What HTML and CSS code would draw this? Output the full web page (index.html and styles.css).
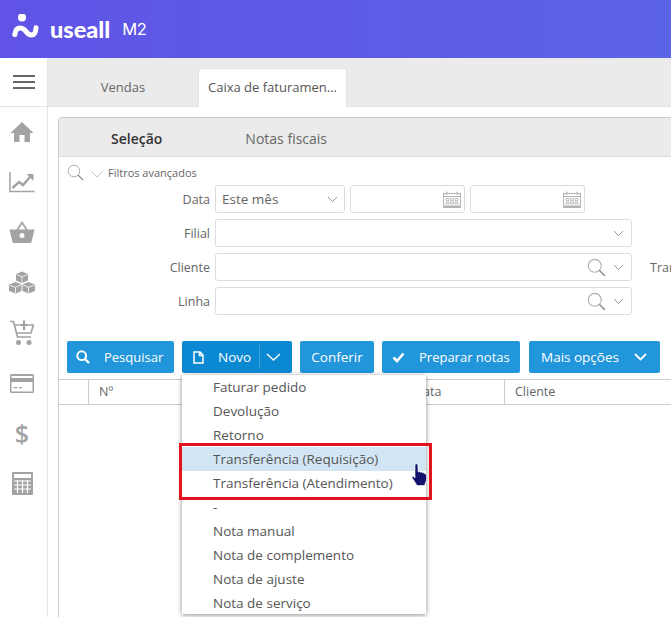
FILE: index.html
```html
<!DOCTYPE html>
<html lang="en">
<head>
    <meta charset="UTF-8">
    <meta name="viewport" content="width=device-width, initial-scale=1.0">
    <title>Useall M2</title>
    <link rel="stylesheet" href="styles.css">
</head>
<body>
    <header class="topbar">
        <svg class="logo-mark" width="28" height="30" viewBox="0 0 28 30">
            <circle cx="10" cy="3.4" r="4" fill="#fff"/>
            <path d="M2.8 20.6 Q3.6 14 8 14 Q11.5 14 14 17.5 Q16.5 21 19.5 21 Q23.6 21 24 13.8" fill="none" stroke="#fff" stroke-width="5" stroke-linecap="round"/>
        </svg>
        <span class="logo-name">useall</span>
        <span class="logo-product">M2</span>
    </header>

    <div class="layout">
        <aside class="sidebar">
            <div class="burger">
                <span></span><span></span><span></span>
            </div>
            <nav class="side-icons">
                <div class="side-icon">
                    <svg width="24" height="22" viewBox="0 0 24 22"><path d="M12 1 L0.5 12 H4 V21 H9.5 V14 H14.5 V21 H20 V12 H23.5 Z" fill="#a3a3a3"/></svg>
                </div>
                <div class="side-icon">
                    <svg width="26" height="22" viewBox="0 0 26 22"><path d="M1 1 V20.5 H25.5" fill="none" stroke="#a3a3a3" stroke-width="1.5"/><path d="M3.5 17 L10 11 L14 14 L21 6" fill="none" stroke="#a3a3a3" stroke-width="2.4"/><path d="M17.5 3 H24.5 V10 Z" fill="#a3a3a3"/></svg>
                </div>
                <div class="side-icon">
                    <svg width="26" height="24" viewBox="0 0 26 24"><path d="M8 10 L13 2.5 L18 10" fill="none" stroke="#a3a3a3" stroke-width="1.8"/><path d="M0.5 9.5 H25.5 L22.5 22 Q22.3 23 21 23 H5 Q3.7 23 3.5 22 Z" fill="#a3a3a3"/><circle cx="13" cy="15.5" r="2.5" fill="#fff"/></svg>
                </div>
                <div class="side-icon">
                    <svg width="28" height="25" viewBox="0 0 28 24"><path d="M14 1 L20 3.5 V10 L14 12.5 L8 10 V3.5 Z M7.5 11.5 L13.5 14 V20.5 L7.5 23 L1 20.5 V14 Z M20.5 11.5 L27 14 V20.5 L20.5 23 L14.5 20.5 V14 Z" fill="#a3a3a3"/><path d="M8.5 4 L14 6.2 L19.5 4 M14 6.2 V12 M1.5 14.5 L7.5 16.8 L13 14.5 M7.5 16.8 V22.5 M15 14.5 L20.5 16.8 L26.5 14.5 M20.5 16.8 V22.5" fill="none" stroke="#fff" stroke-width="0.8"/></svg>
                </div>
                <div class="side-icon">
                    <svg width="24" height="26" viewBox="0 0 24 26"><path d="M0 1.5 H3.5 L7.5 17 H21" fill="none" stroke="#a3a3a3" stroke-width="1.7"/><path d="M5 5 H9 M19 5 H23.5 L21 13 H6.5" fill="none" stroke="#a3a3a3" stroke-width="1.7"/><path d="M14 0.5 V10 M9.5 5 H18.5" stroke="#a3a3a3" stroke-width="2.2"/><circle cx="8.5" cy="22.5" r="2.5" fill="#a3a3a3"/><circle cx="19" cy="22.5" r="2.5" fill="#a3a3a3"/></svg>
                </div>
                <div class="side-icon">
                    <svg width="24" height="19" viewBox="0 0 24 19"><rect x="0" y="0" width="24" height="19" rx="1.5" fill="#a3a3a3"/><rect x="1.5" y="2" width="21" height="2" fill="#fff"/><rect x="1.5" y="8" width="21" height="9.5" fill="#fff"/><rect x="3.5" y="13" width="4" height="1.2" fill="#a3a3a3"/><rect x="9" y="13" width="3" height="1.2" fill="#a3a3a3"/></svg>
                </div>
                <div class="side-icon side-dollar">$</div>
                <div class="side-icon">
                    <svg width="21" height="23" viewBox="0 0 21 23"><rect x="0" y="0" width="21" height="23" rx="1" fill="#a3a3a3"/><rect x="2" y="2" width="17" height="4" fill="#fff"/><path d="M2 9 H19 M2 13 H19 M2 17 H19 M5.5 8 V21 M10.5 8 V21 M15.5 8 V21" stroke="#fff" stroke-width="1.2"/></svg>
                </div>
            </nav>
        </aside>

        <main class="content">
            <div class="tabs">
                <div class="tab">Vendas</div>
                <div class="tab active">Caixa de faturamen...</div>
            </div>

            <section class="panel">
                <div class="panel-head">
                    <span class="panel-tab selected">Seleção</span>
                    <span class="panel-tab">Notas fiscais</span>
                </div>

                <div class="filter-toggle">
                    <svg width="17" height="17" viewBox="0 0 17 17"><use href="#lupa"/></svg>
                    <svg width="14" height="8" viewBox="0 0 14 8"><path d="M1 1 L7 7 L13 1" fill="none" stroke="#c4c4c4" stroke-width="1"/></svg>
                    <span>Filtros avançados</span>
                </div>

                <div class="form-row">
                    <label class="form-label">Data</label>
                    <div class="field field-select"><span>Este mês</span><svg class="chev" width="11" height="7" viewBox="0 0 11 7"><path d="M1 1 L5.5 5.5 L10 1" fill="none" stroke="#999" stroke-width="1"/></svg></div>
                    <div class="field field-date"><svg width="18" height="17" viewBox="0 0 18 17"><use href="#calendario"/></svg></div>
                    <div class="field field-date"><svg width="18" height="17" viewBox="0 0 18 17"><use href="#calendario"/></svg></div>
                </div>
                <div class="form-row">
                    <label class="form-label">Filial</label>
                    <div class="field field-wide"><svg class="chev" width="11" height="7" viewBox="0 0 11 7"><path d="M1 1 L5.5 5.5 L10 1" fill="none" stroke="#999" stroke-width="1"/></svg></div>
                </div>
                <div class="form-row">
                    <label class="form-label">Cliente</label>
                    <div class="field field-wide"><svg class="lupa" width="19" height="19" viewBox="0 0 17 17"><use href="#lupa"/></svg><svg class="chev" width="11" height="7" viewBox="0 0 11 7"><path d="M1 1 L5.5 5.5 L10 1" fill="none" stroke="#999" stroke-width="1"/></svg></div>
                    <label class="form-extra">Tran</label>
                </div>
                <div class="form-row">
                    <label class="form-label">Linha</label>
                    <div class="field field-wide"><svg class="lupa" width="19" height="19" viewBox="0 0 17 17"><use href="#lupa"/></svg><svg class="chev" width="11" height="7" viewBox="0 0 11 7"><path d="M1 1 L5.5 5.5 L10 1" fill="none" stroke="#999" stroke-width="1"/></svg></div>
                </div>

                <div class="actions">
                    <button class="btn btn-pesquisar">
                        <svg width="14" height="14" viewBox="0 0 14 14"><circle cx="5.7" cy="5.7" r="4.4" fill="none" stroke="#fff" stroke-width="2"/><path d="M9 9 L13 13" stroke="#fff" stroke-width="2.4"/></svg>
                        Pesquisar
                    </button>
                    <button class="btn btn-novo">
                        <svg width="11" height="13" viewBox="0 0 11 13"><path d="M1 1 H7 L10 4 V12 H1 Z M6.5 1 V4.5 H10" fill="none" stroke="#fff" stroke-width="1.5"/></svg>
                        <span class="novo-label">Novo</span>
                        <span class="btn-split"><svg width="15" height="8" viewBox="0 0 15 8"><path d="M1 1 L7.5 7 L14 1" fill="none" stroke="#fff" stroke-width="1.3"/></svg></span>
                    </button>
                    <button class="btn btn-conferir">Conferir</button>
                    <button class="btn btn-preparar">
                        <svg width="13" height="11" viewBox="0 0 13 11"><path d="M1.5 5.5 L5 9 L11.5 1.5" fill="none" stroke="#fff" stroke-width="2.6"/></svg>
                        Preparar notas
                    </button>
                    <button class="btn btn-mais">
                        Mais opções
                        <svg width="13" height="8" viewBox="0 0 13 8"><path d="M1 1 L6.5 6.5 L12 1" fill="none" stroke="#fff" stroke-width="1.8"/></svg>
                    </button>
                </div>

                <div class="grid-head">
                    <div class="col col-check"></div>
                    <div class="col col-num">Nº</div>
                    <div class="col col-data">Data</div>
                    <div class="col col-cliente">Cliente</div>
                </div>
            </section>

            <div class="menu">
                <div class="menu-item">Faturar pedido</div>
                <div class="menu-item">Devolução</div>
                <div class="menu-item">Retorno</div>
                <div class="menu-item hover">Transferência (Requisição)</div>
                <div class="menu-item">Transferência (Atendimento)</div>
                <div class="menu-item">-</div>
                <div class="menu-item">Nota manual</div>
                <div class="menu-item">Nota de complemento</div>
                <div class="menu-item">Nota de ajuste</div>
                <div class="menu-item">Nota de serviço</div>
            </div>
            <div class="red-box"></div>
            <svg class="hand" width="17" height="24" viewBox="0 0 17 24">
                <path d="M4 1.5 Q5.6 0 6.8 1.5 L7.2 9 L8.6 8.6 L9.2 9.2 L10.8 9 L11.4 9.8 L13 9.8 L14 11 L15.5 11.5 L15.5 17 L13.5 22.5 L6 22.5 L1 14.5 Q1 12.5 3 13.5 L4 15 Z" fill="#12126e" stroke="#fff" stroke-width="0.6"/>
            </svg>
        </main>
    </div>

    <svg width="0" height="0" class="defs">
        <defs>
            <g id="lupa">
                <circle cx="7" cy="7" r="5.8" fill="none" stroke="#b0b0b0" stroke-width="1"/>
                <path d="M11 11 L16 16" stroke="#8f8f8f" stroke-width="1.3"/>
            </g>
            <g id="calendario">
                <rect x="0.5" y="2.5" width="17" height="14" fill="none" stroke="#b3b3b3"/>
                <rect x="0" y="14.5" width="18" height="2.5" fill="#b3b3b3"/>
                <path d="M4 0.5 V4 M14 0.5 V4 M0.5 5.5 H17.5" stroke="#b3b3b3"/>
                <path d="M3 7.5 H6 V9.5 H3 Z M7.5 7.5 H10.5 V9.5 H7.5 Z M12 7.5 H15 V9.5 H12 Z M3 11 H6 V13 H3 Z M7.5 11 H10.5 V13 H7.5 Z M12 11 H15 V13 H12 Z" fill="none" stroke="#b3b3b3" stroke-width="0.8"/>
            </g>
        </defs>
    </svg>
</body>
</html>
```

FILE: styles.css
```css
* {
    margin: 0;
    padding: 0;
    box-sizing: border-box;
    font-family: "Open Sans", sans-serif;
}
html, body {
    height: 617px;
    overflow: hidden;
    background: #fff;
}
.defs {
    position: absolute;
}

/* topo */
.topbar {
    height: 58px;
    background: linear-gradient(90deg, #6053e6, #5b63e6);
    display: flex;
    align-items: center;
    padding-left: 12px;
    color: #fff;
}
.logo-mark {
    margin-right: 10px;
}
.logo-name {
    font-family: Lato, sans-serif;
    font-size: 23.5px;
    font-weight: 900;
    margin-right: 12px;
}
.logo-product {
    font-family: Inter, sans-serif;
    font-size: 16.5px;
    font-weight: 400;
    letter-spacing: -0.5px;
}

.layout {
    display: flex;
    height: 559px;
}

/* lateral */
.sidebar {
    width: 48px;
    flex: none;
    border-right: 1px solid #e4e4e4;
}
.burger {
    height: 49px;
    border-bottom: 1px solid #e4e4e4;
    display: flex;
    flex-direction: column;
    align-items: center;
    justify-content: center;
    gap: 4px;
    padding-bottom: 1px;
}
.burger span {
    width: 22px;
    height: 2px;
    background: #666;
}
.side-icon {
    height: 50.2px;
    display: flex;
    align-items: center;
    justify-content: center;
    padding-right: 3px;
}
.side-dollar {
    font-size: 25px;
    font-weight: 600;
    color: #a3a3a3;
}

/* conteudo */
.content {
    flex: 1;
    min-width: 0;
    position: relative;
    overflow: hidden;
}
.tabs {
    height: 49px;
    background: #ebebeb;
    border-bottom: 1px solid #e2e2e2;
    padding-top: 10px;
    display: flex;
    font-size: 13px;
    color: #666;
}
.tab {
    width: 150px;
    text-align: center;
    line-height: 38px;
}
.tab.active {
    width: 149px;
    height: 39px;
    background: #fff;
    border: 1px solid #e4e4e4;
    border-bottom: none;
    border-radius: 3px 3px 0 0;
    color: #555;
    line-height: 37px;
    white-space: nowrap;
}
.panel {
    margin: 10px 0 0 10px;
    width: 700px;
    height: 520px;
    border-left: 1px solid #ccc;
    border-top: 1px solid #ccc;
    border-top-left-radius: 4px;
}
.panel-head {
    height: 39px;
    background: #ebebeb;
    border-bottom: 1px solid #ddd;
    display: flex;
    align-items: center;
    padding-left: 52px;
    padding-top: 2px;
    gap: 83px;
    font-size: 14px;
    color: #666;
}
.panel-tab.selected {
    font-weight: 600;
    color: #333;
}
.filter-toggle {
    height: 28px;
    display: flex;
    align-items: center;
    padding: 3px 0 0 8px;
    font-size: 11px;
    color: #666;
}
.filter-toggle svg:nth-child(2) {
    margin: 2px 4px 0 6px;
}

/* formulario */
.form-row {
    display: flex;
    align-items: center;
    gap: 5px;
    height: 28px;
    margin-bottom: 6px;
    font-size: 12.5px;
    color: #666;
}
.form-label {
    width: 151px;
    text-align: right;
}
.field {
    height: 28px;
    border: 1px solid #ddd;
    border-radius: 3px;
    display: flex;
    align-items: center;
    justify-content: flex-end;
    flex: none;
}
.field-select {
    width: 130px;
    justify-content: space-between;
    padding: 0 6px;
    font-size: 13.5px;
}
.field-date {
    width: 115px;
    padding-right: 3px;
}
.field-wide {
    width: 417px;
    padding-right: 7px;
}
.lupa {
    margin-right: 7px;
}
.form-extra {
    margin-left: 13px;
    white-space: nowrap;
}

/* botoes */
.actions {
    display: flex;
    gap: 8px;
    margin: 26px 0 6px 8px;
}
.btn {
    height: 32px;
    border: none;
    border-radius: 2px;
    background: #2196db;
    color: #fff;
    font-size: 13px;
    display: flex;
    align-items: center;
    flex: none;
}
.btn-pesquisar {
    width: 107px;
    padding-left: 9px;
    gap: 14px;
}
.btn-novo {
    width: 110px;
    padding-left: 11px;
    background: #0a88d2;
}
.novo-label {
    margin-left: 14px;
    font-size: 13.5px;
}
.btn-split {
    margin-left: 8px;
    padding-left: 6px;
    height: 24px;
    display: flex;
    align-items: center;
    border-left: 1px solid #3f9fdc;
}
.btn-conferir {
    width: 74px;
    justify-content: center;
    font-size: 13.5px;
}
.btn-preparar {
    width: 138px;
    padding-left: 10px;
    gap: 14px;
}
.btn-mais {
    width: 131px;
    padding-left: 12px;
    gap: 15px;
    margin-left: 1px;
    font-size: 13.5px;
}

/* tabela */
.grid-head {
    height: 26px;
    border-top: 1px solid #ccc;
    border-bottom: 1px solid #ccc;
    display: flex;
    font-size: 12.5px;
    color: #666;
    line-height: 24px;
}
.col {
    border-right: 1px solid #ccc;
    padding-left: 10px;
    flex: none;
}
.col-check {
    width: 30px;
}
.col-num {
    width: 240px;
}
.col-data {
    width: 176px;
    padding-left: 85px;
}
.col-cliente {
    flex: 1;
    border-right: none;
}

/* menu aberto */
.menu {
    position: absolute;
    left: 134px;
    top: 317px;
    width: 244px;
    height: 239px;
    background: #fff;
    box-shadow: 0 1px 5px rgba(0, 0, 0, 0.45);
    font-size: 13.5px;
    color: #555;
}
.menu-item {
    height: 24px;
    line-height: 24px;
    padding-left: 31px;
}
.menu-item.hover {
    background: #d2e5f4;
}
.red-box {
    position: absolute;
    left: 131px;
    top: 385px;
    width: 253px;
    height: 57px;
    border: 3px solid #e3141f;
}
.hand {
    position: absolute;
    left: 363px;
    top: 405px;
}
```
